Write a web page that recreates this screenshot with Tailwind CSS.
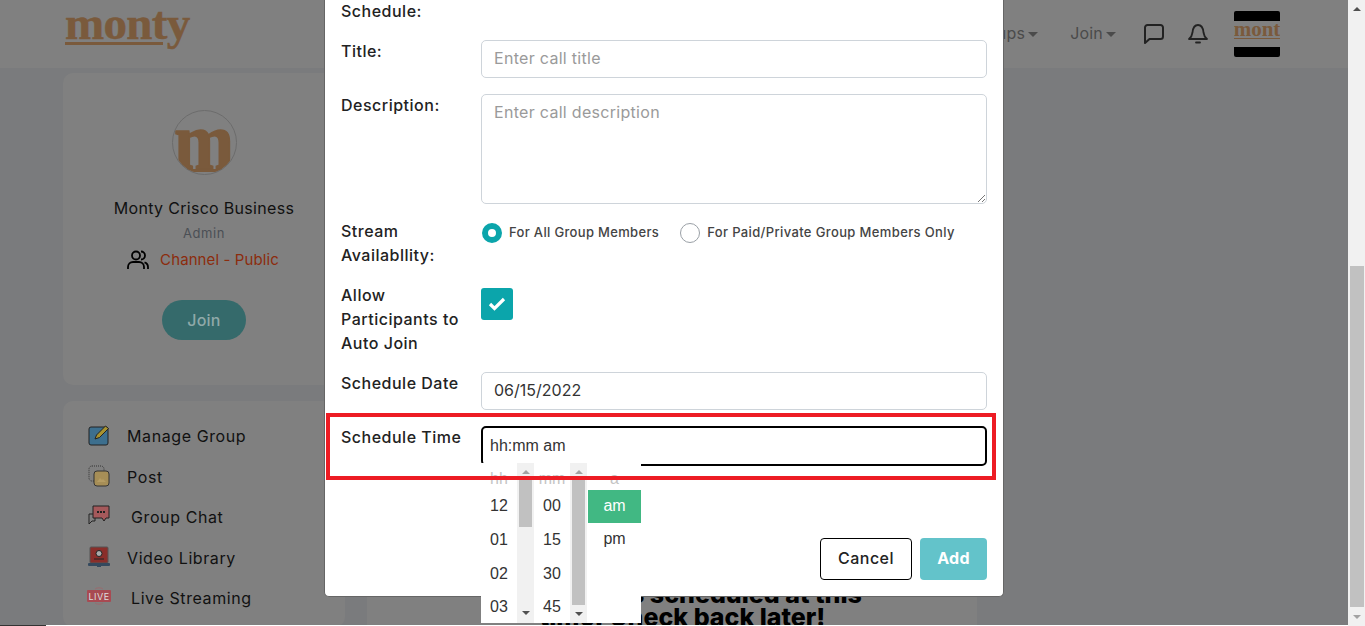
<!doctype html>
<html><head><meta charset="utf-8"><script src="https://cdn.jsdelivr.net/npm/@tailwindcss/browser@4"></script></head>
<body class="m-0 overflow-hidden">
<div class="relative flex h-[626px] w-[1365px] overflow-hidden bg-[#7a7b7d] font-['Inter',sans-serif] text-[#111]">
 <!-- page under the dimmer -->
 <div class="flex h-full w-[1348px] flex-col">
  <header class="flex h-[68px] shrink-0 items-center justify-between bg-[#808080] pl-[65px] pr-[68px]">
   <div class="flex flex-col pb-[17px]">
    <div class="font-['Liberation_Serif',serif] text-[47px] leading-[34px] font-bold tracking-[-0.7px] text-[#7a5a3c] [-webkit-text-stroke:0.5px_#7a5a3c]">monty</div>
    <div class="mt-[2px] h-[3px] w-[98px] bg-[#7a5a3c]"></div>
   </div>
   <div class="flex items-center">
    <span class="mb-[2px] text-[16px] tracking-[0.2px] text-[#4b4b4b]">Groups</span><span class="ml-[3px] h-0 w-0 border-x-[5px] border-t-[5px] border-x-transparent border-t-[#4b4b4b]"></span>
    <span class="mb-[2px] ml-[32px] text-[16px] tracking-[0.2px] text-[#4b4b4b]">Join</span><span class="ml-[3px] h-0 w-0 border-x-[5px] border-t-[5px] border-x-transparent border-t-[#4b4b4b]"></span>
    <svg class="ml-[28px]" width="20" height="20" viewBox="0 0 20 20" fill="none" stroke="#222" stroke-width="2" stroke-linejoin="round"><path d="M1 3.500a2.500 2.500 0 0 1 2.500-2.500h13a2.500 2.500 0 0 1 2.500 2.500v9a2.500 2.500 0 0 1-2.500 2.500H5.500L1 19z"/></svg>
    <svg class="ml-[24px]" width="20" height="20" viewBox="0 0 20 20" fill="none" stroke="#222" stroke-width="1.800" stroke-linecap="round" stroke-linejoin="round"><path d="M1 15c2-1.500 3-3 3.500-6.500C5 3 6.500 1 10 1s5 2 5.500 7.500C16 12 17 13.500 19 15z"/><path d="M8 18.500h4"/></svg>
    <div class="ml-[26px] flex h-[46px] w-[46px] flex-col justify-center overflow-hidden rounded-[2px] bg-black">
     <div class="flex h-[26px] flex-col items-center bg-[#808080] pt-[1px]"><span class="font-['Liberation_Serif',serif] text-[21px] leading-[14px] font-bold whitespace-nowrap text-[#7a5a3c]">mont</span><span class="mt-[2px] h-[1px] w-full bg-[#7a5a3c]"></span></div>
    </div>
   </div>
  </header>
  <div class="flex flex-1 gap-[22px] pl-[63px] pt-[5px]">
   <aside class="flex w-[282px] shrink-0 flex-col gap-[16px]">
    <section class="flex h-[312px] flex-col items-center rounded-[10px] bg-[#808080] pt-[37px]">
     <div class="flex h-[65px] w-[65px] flex-col items-center overflow-hidden rounded-full border border-[#6c6c6c] pt-[12px]">
      <div class="h-[46px] origin-top scale-y-115 font-['Liberation_Serif',serif] text-[72px] leading-[32px] font-bold text-[#7a5a3c] [-webkit-text-stroke:1.500px_#7a5a3c]">m</div>
      <div class="h-[3px] w-[44px] bg-[#7a5a3c]"></div>
     </div>
     <div class="mt-[21px] text-[16px] tracking-[0.3px] text-[#111]">Monty Crisco Business</div>
     <div class="mt-[4px] text-[13px] tracking-[0.6px] text-[#4b4f55]">Admin</div>
     <div class="mt-[5px] -ml-[2px] flex items-center gap-[11px]">
      <svg width="22" height="20" viewBox="0 0 22 20" fill="none" stroke="#000" stroke-width="1.800"><circle cx="9" cy="5.500" r="4"/><path d="M1 19v-2a5 5 0 0 1 5-5h6a5 5 0 0 1 5 5v2M14 1.500a4 4 0 0 1 0 8M21 19v-2a5 5 0 0 0-3.500-4.700"/></svg>
      <span class="text-[15px] tracking-[0.1px] text-[#8c2c0d]">Channel - Public</span>
     </div>
     <div class="mt-[29px] flex h-[40px] w-[84px] items-center justify-center rounded-[20px] bg-[#356a6b] text-[16px] font-medium tracking-[0.2px] text-[#8fa9a9]">Join</div>
    </section>
    <section class="flex-1 rounded-[10px] bg-[#808080] pl-[25px] pt-[23px] text-[16px] tracking-[0.6px]">
     <div class="flex h-[40.5px] items-start gap-[17px]"><svg width="22" height="22" viewBox="0 0 22 22"><rect x="1" y="3" width="19" height="18" rx="2" fill="#3d6f8e" stroke="#222"/><path d="M7 15l1.500-4 9-9 3 2.500-9 9z" fill="#a8922f" stroke="#222"/></svg><span>Manage Group</span></div>
     <div class="flex h-[40.5px] items-start gap-[17px]"><svg width="22" height="22" viewBox="0 0 22 22"><rect x="1" y="1" width="15" height="15" rx="3" fill="none" stroke="#333" stroke-dasharray="1 1"/><rect x="6" y="6" width="15" height="15" rx="3" fill="#a68e57" stroke="#333"/><path d="M9 17l3-4 2 2 1-1 3 3z" fill="#b59c63"/></svg><span>Post</span></div>
     <div class="flex h-[40.5px] items-start gap-[21px]"><svg width="22" height="22" viewBox="0 0 22 22"><path d="M1 9h6v7H4l-3 3z" fill="none" stroke="#222"/><path d="M5 1h16v12h-3l-2 3-2-3H5z" fill="#a5595b" stroke="#222"/><path d="M9 7h8" stroke="#222" stroke-width="2" stroke-dasharray="2 1"/></svg><span>Group Chat</span></div>
     <div class="flex h-[40.5px] items-start gap-[17px]"><svg width="22" height="22" viewBox="0 0 22 22"><rect x="2" y="1" width="18" height="16" rx="1" fill="#8a2e2a" stroke="#555"/><circle cx="11" cy="7.500" r="3" fill="#aaa" stroke="#222"/><path d="M6 13h10" stroke="#222"/><rect x="0" y="17" width="22" height="3" rx="1" fill="#34495e"/><rect x="9" y="18" width="4" height="3" fill="#34495e"/></svg><span>Video Library</span></div>
     <div class="-ml-[1px] flex h-[40.5px] items-start gap-[20px]">
      <div class="flex w-[24px] flex-col items-center">
       <svg width="12" height="4" viewBox="0 0 12 4" fill="none" stroke="#9a6b6e"><path d="M2 3a5 3 0 0 1 8 0"/></svg>
       <div class="flex h-[12px] w-[24px] items-center justify-center rounded-[1px] bg-[#a84a52] text-[9px] leading-none tracking-[0.5px] text-[#ddd]">LIVE</div>
       <svg width="12" height="4" viewBox="0 0 12 4" fill="none" stroke="#9a6b6e"><path d="M2 1a5 3 0 0 0 8 0"/></svg>
      </div>
      <span>Live Streaming</span>
     </div>
    </section>
   </aside>
   <main class="flex w-[610px] shrink-0 flex-col items-center justify-end overflow-hidden bg-[#808080] pl-[21px]">
    <p class="mb-[-2px] text-center text-[25px] leading-[23px] font-extrabold whitespace-nowrap text-black">No streams scheduled at this<br>time! Check back later!</p>
   </main>
  </div>
 </div>
 <!-- scrollbar -->
 <div class="flex w-[17px] shrink-0 flex-col items-center bg-[#f1f1f1]">
  <div class="flex h-[17px] items-center"><span class="h-0 w-0 border-x-[4px] border-b-[4px] border-x-transparent border-b-[#505050]"></span></div>
  <div class="mt-[249px] h-[341px] w-[14px] bg-[#c1c1c1]"></div>
  <div class="flex h-[19px] items-center"><span class="h-0 w-0 border-x-[4px] border-t-[4px] border-x-transparent border-t-[#a3a3a3]"></span></div>
 </div>

 <!-- modal -->
 <div class="absolute left-[324px] top-0 h-[597px] w-[680px] rounded-b-[5px] border border-t-0 border-[#666] bg-white px-[16px] text-[16px] font-medium tracking-[0.5px] text-[#222]">
  <div class="grid grid-cols-[140px_506px] content-start">
   <div class="col-span-2 h-[40px] leading-[22px]">Schedule:</div>
   <label class="leading-[22px]">Title:</label>
   <div class="flex h-[38px] items-center rounded-[5px] border border-[#ced4da] px-[12px] pb-[2px] text-[16px] font-normal tracking-[0.3px] text-[#9a9a9a]">Enter call title</div>
   <label class="mt-[15px] leading-[24px]">Description:</label>
   <div class="mt-[16px] flex h-[110px] flex-col justify-between rounded-[5px] border border-[#ced4da] px-[12px] pt-[5px] text-[16px] font-normal tracking-[0.3px] text-[#9a9a9a]">
    <span>Enter call description</span>
    <svg class="-mr-[12px] self-end" width="9" height="9" viewBox="0 0 9 9" fill="none" stroke="#777"><path d="M1 8l7-7M5 8l3-3"/></svg>
   </div>
   <label class="mt-[15px] pb-[1px] leading-[24px]">Stream<br>Availabllity:</label>
   <div class="mt-[17px] flex h-[24px] items-center text-[13px] tracking-[0.33px] text-[#444]">
    <span class="ml-[1px] h-[20px] w-[20px] rounded-full border-[6px] border-[#0ba5ab] bg-white"></span><span class="ml-[7px]">For All Group Members</span>
    <span class="ml-[21px] h-[20px] w-[20px] rounded-full border border-[#9aa0a6] bg-white"></span><span class="ml-[7px] tracking-[0.37px]">For Paid/Private Group Members Only</span>
   </div>
   <label class="mt-[15px] pb-[1px] leading-[24px]">Allow<br>Participants to<br>Auto Join</label>
   <div class="mt-[20px] flex h-[32px] w-[32px] items-center justify-center rounded-[3px] bg-[#0ba5ab]"><svg width="18" height="16" viewBox="0 0 18 16" fill="none" stroke="#fff" stroke-width="3.200"><path d="M2 8l4.500 4.500L16 3"/></svg></div>
   <label class="mt-[15px] leading-[24px]">Schedule Date</label>
   <div class="mt-[16px] flex h-[38px] items-center rounded-[5px] border border-[#ced4da] px-[12px] pb-[2px] text-[16px] font-normal tracking-normal text-[#333]">06/15/2022</div>
  </div>
 </div>
 <!-- time row -->
 <div class="absolute left-[341px] top-[426px] flex text-[16px] font-medium tracking-[0.5px] text-[#222]">
  <span class="-mt-[1px] w-[140px] leading-[24px]">Schedule Time</span>
  <div class="flex h-[40px] w-[506px] items-center rounded-[5px] border-2 border-black px-[7px] font-['Liberation_Sans',sans-serif] text-[16px] font-normal tracking-normal text-[#333]">hh:mm am</div>
 </div>
 <!-- time dropdown -->
 <div class="absolute left-[481px] top-[463px] flex h-[160px] w-[160px] bg-white font-['Liberation_Sans',sans-serif] text-[16px] text-[#333]">
  <div class="w-[36px]"><div class="h-[26px] pt-[4px] text-center text-[#c4c4c4]">hh</div><div class="flex h-[34px] items-center justify-center">12</div><div class="flex h-[34px] items-center justify-center">01</div><div class="flex h-[34px] items-center justify-center">02</div><div class="flex h-[32px] items-center justify-center">03</div></div>
  <div class="flex w-[17px] flex-col items-center bg-[#f1f1f1]"><div class="flex h-[17px] items-center"><span class="h-0 w-0 border-x-[4px] border-b-[4px] border-x-transparent border-b-[#a3a3a3]"></span></div><div class="h-[47px] w-[13px] bg-[#c1c1c1]"></div><div class="mt-auto flex h-[20px] items-center"><span class="h-0 w-0 border-x-[4px] border-t-[4px] border-x-transparent border-t-[#505050]"></span></div></div>
  <div class="w-[36px]"><div class="h-[26px] pt-[4px] text-center text-[#c4c4c4]">mm</div><div class="flex h-[34px] items-center justify-center">00</div><div class="flex h-[34px] items-center justify-center">15</div><div class="flex h-[34px] items-center justify-center">30</div><div class="flex h-[32px] items-center justify-center">45</div></div>
  <div class="flex w-[17px] flex-col items-center bg-[#f1f1f1]"><div class="flex h-[17px] items-center"><span class="h-0 w-0 border-x-[4px] border-b-[4px] border-x-transparent border-b-[#a3a3a3]"></span></div><div class="h-[125px] w-[13px] bg-[#c1c1c1]"></div><div class="mt-auto flex h-[18px] items-center"><span class="h-0 w-0 border-x-[4px] border-t-[4px] border-x-transparent border-t-[#505050]"></span></div></div>
  <div class="ml-[1px] w-[53px]"><div class="h-[27px] pt-[4px] text-center text-[#c4c4c4]">a</div><div class="flex h-[33px] items-center justify-center bg-[#41b883] pb-[2px] font-medium text-white">am</div><div class="flex h-[34px] items-center justify-center pb-[2px]">pm</div></div>
 </div>
 <!-- annotation frame drawn over the time row and its dropdown -->
 <div class="absolute left-[326px] top-[413px] h-[67px] w-[670px] border-[4px] border-[#ed1c24]"></div>
 <!-- modal buttons -->
 <div class="absolute left-[820px] top-[538px] flex gap-[8px] text-[16px]">
  <div class="flex h-[42px] w-[92px] items-center justify-center rounded-[4px] border border-black bg-white pb-[2px] font-medium tracking-[0.5px] text-[#222]">Cancel</div>
  <div class="flex h-[42px] w-[67px] items-center justify-center rounded-[4px] bg-[#63c3ca] pb-[2px] font-bold tracking-[0.3px] text-white">Add</div>
 </div>
 <div class="absolute bottom-0 left-0 h-[1px] w-[46px] bg-[#333]"></div>
 <div class="absolute bottom-0 left-[46px] h-[1px] w-[1302px] bg-white"></div>
</div>
</body></html>
